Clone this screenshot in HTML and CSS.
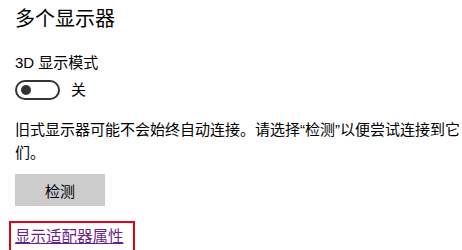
FILE: index.html
```html
<!DOCTYPE html>
<html lang="zh-CN">
  <head>
    <meta charset="utf-8"/>
    <title>多个显示器</title>
    <link rel="stylesheet" href="styles.css">
  </head>
  <body>
    <div id="content">
      <h1>多个显示器</h1>
      <div class="label">3D 显示模式</div>
      <div class="toggle-row">
        <span class="toggle"><span class="knob"></span></span>
        <span class="state">关</span>
      </div>
      <p class="note">旧式显示器可能不会始终自动连接。请选择“检测”以便尝试连接到它们。</p>
      <button class="detect" type="button">检测</button>
      <div class="link-box">
        <a href="#" class="link">显示适配器属性</a>
      </div>
    </div>
  </body>
</html>
```

FILE: styles.css
```css
body {
  background: #ffffff;
  margin: 0;
  font: 15px "Liberation Sans", "Noto Sans CJK SC", sans-serif;
  color: #000000;
  overflow: hidden;
}
#content {
  padding: 5px 0 0 15px;
  width: 447px;
}
h1 {
  font-size: 20px;
  font-weight: normal;
  line-height: 28px;
  margin: 0;
}
.label {
  line-height: 22px;
  margin-top: 19px;
}
.toggle-row {
  display: flex;
  align-items: center;
  gap: 11px;
  margin-top: 6px;
  height: 20px;
}
.toggle {
  box-sizing: border-box;
  width: 45px;
  height: 20px;
  border: 2px solid #333333;
  border-radius: 10px;
  display: flex;
  align-items: center;
  padding-left: 4px;
}
.knob {
  width: 10px;
  height: 10px;
  border-radius: 50%;
  background: #333333;
}
.state {
  line-height: 20px;
}
.note {
  line-height: 23px;
  margin: 18px 0 0 0;
}
.detect {
  display: block;
  width: 90px;
  height: 32px;
  margin-top: 10px;
  border: 0;
  background: #cccccc;
  font: inherit;
  color: #000000;
  padding: 0;
}
.link-box {
  margin: 15px 0 0 -6px;
  width: 118px;
  height: 28px;
  border: 2px solid #e0001b;
  padding: 0 0 0 4px;
}
.link {
  color: #6b1f8f;
  line-height: 22px;
  display: inline-block;
  padding-top: 3px;
  font-size: 15.5px;
}
```
